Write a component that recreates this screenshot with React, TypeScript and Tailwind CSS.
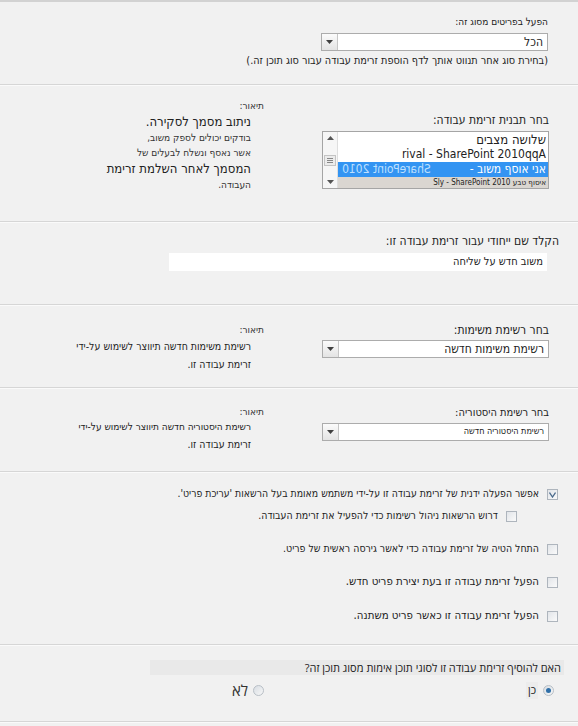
import React from 'react';

const font = { fontFamily: '"DejaVu Sans Condensed", "Open Sans", "DejaVu Sans", sans-serif' };
const openSans = { fontFamily: '"Open Sans", "DejaVu Sans", sans-serif' };

function DropButton() {
  return (
    <div className="w-[16px] h-full border-r border-[#c6c6c6] bg-gradient-to-b from-[#fbfbfb] to-[#e4e4e4] flex items-center justify-center shrink-0">
      <svg width="7" height="4" viewBox="0 0 7 4">
        <path d="M0 0h7L3.5 4z" fill="#404040" />
      </svg>
    </div>
  );
}

function Select({ value, small }: { value: string; small?: boolean }) {
  return (
    <div className="w-[227px] h-[18px] bg-white border border-[#acacac] flex items-stretch">
      <div className={`flex-1 pr-[4px] flex items-center ${small ? 'text-[9px]' : 'text-[12px]'} text-[#222]`}>{value}</div>
      <DropButton />
    </div>
  );
}

function Check({ checked }: { checked?: boolean }) {
  return (
    <div className="w-[11px] h-[11px] border border-[#aeb5bd] bg-gradient-to-br from-[#e2e5e9] to-[#fafafa] flex items-center justify-center shrink-0">
      {checked && (
        <svg width="7" height="7" viewBox="0 0 7 7">
          <path d="M0.5 1.5L3.5 6L6.5 1.5" fill="none" stroke="#4a6a8c" strokeWidth="1.3" />
        </svg>
      )}
    </div>
  );
}

function Radio({ checked }: { checked?: boolean }) {
  return (
    <div className="w-[11px] h-[11px] rounded-full border border-[#b8bfc6] bg-gradient-to-br from-[#d8dde3] to-[#f7f7f7] flex items-center justify-center shrink-0">
      {checked && <div className="w-[5px] h-[5px] rounded-full bg-[#2f6fa8]" />}
    </div>
  );
}

function Desc({ children }: { children: React.ReactNode }) {
  return (
    <div className="flex flex-col whitespace-nowrap">
      <div className="text-[10px] text-[#333] leading-[14px]">תיאור:</div>
      <div className="pr-[13px] flex flex-col">{children}</div>
    </div>
  );
}

function Section({ children, className }: { children: React.ReactNode; className: string }) {
  return (
    <div className={`border-b border-[#d6d6d6] shadow-[0_1px_0_#fafafa] ${className}`}>{children}</div>
  );
}

export default function App() {
  return (
    <div dir="rtl" style={font} className="w-[578px] h-[726px] bg-[#f1f1f1] border-t-2 border-[#d2d2d2] overflow-hidden">
      <Section className="h-[83px] pt-[13px] pr-[30px]">
        <div className="text-[10px] text-[#222] leading-[14px]">הפעל בפריטים מסוג זה:</div>
        <div className="mt-[4px]">
          <Select value="הכל" />
        </div>
        <div className="mt-[3px] text-[10.8px] text-[#222] leading-[14px] whitespace-nowrap">(בחירת סוג אחר תנווט אותך לדף הוספת זרימת עבודה עבור סוג תוכן זה.)</div>
      </Section>

      <Section className="h-[137px] pt-[14px] pr-[29px] flex">
        <div className="w-[227px] pt-[14px]">
          <div className="text-[12px] text-[#222] leading-[15px]">בחר תבנית זרימת עבודה:</div>
          <div className="mt-[3px] w-[227px] h-[58px] bg-white border border-[#a5a5a5] flex items-stretch">
            <div className="flex-1 flex flex-col whitespace-nowrap overflow-hidden">
              <div className="h-[15px] pr-[2px] text-[13px] leading-[15px] text-[#222]">שלושה מצבים</div>
              <div className="h-[15px] pr-[2px] text-[12px] leading-[15px] text-[#222]">rival - SharePoint 2010qqA</div>
              <div className="h-[15px] pr-[2px] pl-[4px] bg-[#3394f2] text-[12px] leading-[15px] text-white flex justify-between">
                <span>אני אוסף משוב -</span>
                <span className="text-[#bfe0ff] -scale-x-100 inline-block">SharePoint 2010</span>
              </div>
              <div className="flex-1 pr-[2px] bg-[#dad6d1] text-[8px] leading-[12px] text-[#222]">איסוף טבע 2010 Sly - SharePoint</div>
            </div>
            <div className="w-[15px] border-r border-[#dedede] bg-[#f6f6f6] flex flex-col items-center justify-between py-[4px]">
              <svg width="7" height="4" viewBox="0 0 7 4"><path d="M0 4h7L3.5 0z" fill="#555" /></svg>
              <div className="w-[12px] h-[11px] border border-[#c4c4c4] bg-[#ececec] flex flex-col items-center justify-center gap-[1px]">
                <div className="w-[6px] h-px bg-[#888]" />
                <div className="w-[6px] h-px bg-[#888]" />
                <div className="w-[6px] h-px bg-[#888]" />
              </div>
              <svg width="7" height="4" viewBox="0 0 7 4"><path d="M0 0h7L3.5 4z" fill="#555" /></svg>
            </div>
          </div>
        </div>
        <div className="mr-[58px]">
          <Desc>
            <div className="text-[13px] leading-[17px] text-[#222]">ניתוב מסמך לסקירה.</div>
            <div className="text-[10px] leading-[15px] text-[#333]">בודקים יכולים לספק משוב,</div>
            <div className="text-[10px] leading-[15px] text-[#333]">אשר נאסף ונשלח לבעלים של</div>
            <div className="text-[13px] leading-[17px] text-[#222]">המסמך לאחר השלמת זרימת</div>
            <div className="text-[10px] leading-[15px] text-[#333]">העבודה.</div>
          </Desc>
        </div>
      </Section>

      <Section className="h-[83px] pt-[12px] pr-[19px]">
        <div className="text-[12px] text-[#222] leading-[15px]">הקלד שם ייחודי עבור זרימת עבודה זו:</div>
        <div className="mt-[4px] mr-[12px] w-[378px] h-[18px] bg-white pr-[4px] text-[11px] leading-[18px] text-[#222]">משוב חדש על שליחה</div>
      </Section>

      <Section className="h-[83px] pt-[18px] pr-[29px] flex">
        <div className="w-[227px]">
          <div className="text-[12px] text-[#222] leading-[15px]">בחר רשימת משימות:</div>
          <div className="mt-[2px]">
            <Select value="רשימת משימות חדשה" />
          </div>
        </div>
        <div className="mr-[58px]">
          <Desc>
            <div className="text-[10.5px] leading-[18px] text-[#222]">רשימת משימות חדשה תיווצר לשימוש על-ידי</div>
            <div className="text-[10.5px] leading-[18px] text-[#222]">זרימת עבודה זו.</div>
          </Desc>
        </div>
      </Section>

      <Section className="h-[84px] pt-[17px] pr-[29px] flex">
        <div className="w-[227px]">
          <div className="text-[11px] text-[#222] leading-[15px]">בחר רשימת היסטוריה:</div>
          <div className="mt-[3px]">
            <Select value="רשימת היסטוריה חדשה" small />
          </div>
        </div>
        <div className="mr-[58px]">
          <Desc>
            <div className="text-[10px] leading-[16px] text-[#222]">רשימת היסטוריה חדשה תיווצר לשימוש על-ידי</div>
            <div className="text-[10.5px] leading-[18px] text-[#222]">זרימת עבודה זו.</div>
          </Desc>
        </div>
      </Section>

      <Section className="h-[173px] pt-[15px] pr-[20px] flex flex-col whitespace-nowrap">
        <div className="flex items-center gap-[8px] h-[14px] text-[10.4px] text-[#222]">
          <Check checked />
          <span>אפשר הפעלה ידנית של זרימת עבודה זו על-ידי משתמש מאומת בעל הרשאות 'עריכת פריט'.</span>
        </div>
        <div className="mt-[8px] mr-[41px] flex items-center gap-[8px] h-[14px] text-[10.5px] text-[#222]">
          <Check />
          <span>דרוש הרשאות ניהול רשימות כדי להפעיל את זרימת העבודה.</span>
        </div>
        <div className="mt-[19px] flex items-center gap-[8px] h-[14px] text-[10.5px] text-[#222]">
          <Check />
          <span>התחל הטיה של זרימת עבודה כדי לאשר גירסה ראשית של פריט.</span>
        </div>
        <div className="mt-[19px] flex items-center gap-[8px] h-[14px] text-[11.4px] text-[#222]">
          <Check />
          <span>הפעל זרימת עבודה זו בעת יצירת פריט חדש.</span>
        </div>
        <div className="mt-[20px] flex items-center gap-[8px] h-[14px] text-[11.4px] text-[#222]">
          <Check />
          <span>הפעל זרימת עבודה זו כאשר פריט משתנה.</span>
        </div>
      </Section>

      <Section className="h-[77px] pt-[15px] pr-[14px] pl-[150px]">
        <div style={openSans} className="h-[15px] bg-[#e9e9e9] pr-[3px] text-[11px] leading-[15px] text-[#222] whitespace-nowrap">האם להוסיף זרימת עבודה זו לסוגי תוכן אימות מסוג תוכן זה?</div>
        <div className="mt-[4px] flex items-center pr-[10px]">
          <div className="flex items-center gap-[5px] w-[290px]">
            <Radio checked />
            <span style={openSans} className="text-[11px] text-[#222] bg-[#ececec] px-[2px]">כן</span>
          </div>
          <div className="flex items-center gap-[5px]">
            <Radio />
            <span style={openSans} className="text-[15px] text-[#333]">לא</span>
          </div>
        </div>
      </Section>
    </div>
  );
}
